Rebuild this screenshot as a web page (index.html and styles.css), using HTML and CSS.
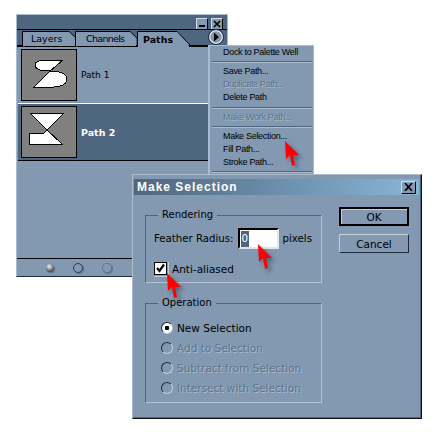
FILE: index.html
```html
<!DOCTYPE html>
<html>
<head>
  <title>Make Selection</title>
  <meta name="viewport" content="width=device-width, initial-scale=1.0">
  <link rel="stylesheet" href="styles.css">
</head>
<body>
  <!-- Paths palette -->
  <div class="palette">
    <div class="palette-title">
      <span class="win-btn"><span class="min-mark"></span></span>
      <span class="win-btn">
        <svg width="8" height="8" viewBox="0 0 8 8"><path d="M1 1l6 6M7 1l-6 6" stroke="#000" stroke-width="1.6"/></svg>
      </span>
    </div>
    <div class="tabs">
      <div class="tab">
        <svg class="tab-bg" width="54" height="16" viewBox="0 0 54 16"><path d="M.5 15.5V.5H47L54 7" fill="#8299b1" stroke="#000"/><path d="M47 1l6 7v7H1V1z" fill="#8299b1"/></svg>
        <span class="tab-label">Layers</span>
      </div>
      <div class="tab tab-wide">
        <svg class="tab-bg" width="63" height="16" viewBox="0 0 63 16"><path d="M.5 15.5V.5H55L62 7" fill="#8299b1" stroke="#000"/><path d="M55 1l6 7v7H1V1z" fill="#8299b1"/></svg>
        <span class="tab-label">Channels</span>
      </div>
      <div class="tab tab-active">
        <svg class="tab-bg" width="54" height="17" viewBox="0 0 54 17"><path d="M.5 16V.5H40L53 14" fill="#8299b1" stroke="#000"/><path d="M40 1l12 14v2H1V1z" fill="#8299b1"/></svg>
        <span class="tab-label">Paths</span>
      </div>
      <svg class="menu-btn" width="16" height="16" viewBox="0 0 16 16">
        <circle cx="8" cy="8" r="6.5" fill="#8299b1" stroke="#dfe6ee" stroke-width="1.6"/>
        <circle cx="8" cy="8" r="7.5" fill="none" stroke="#1c2a3a"/>
        <path d="M6 3.5l5 4.5-5 4.5z" fill="#000"/>
      </svg>
    </div>
    <div class="path-list">
      <div class="path-row">
        <div class="thumb">
          <svg width="54" height="50" viewBox="0 0 54 50"><path d="M41 10H25C17 10 13 12 13 15C13 19 19 21 28 21ZM28 21C38 21 45 24 45 29C45 34 39 37 32 37H12Z" fill="#fff" stroke="#000"/></svg>
        </div>
        <span class="path-name">Path 1</span>
      </div>
      <div class="path-row path-row-active">
        <div class="thumb">
          <svg width="54" height="50" viewBox="0 0 54 50"><path d="M8 6H42L25 23ZM25 23L40 37H7V26H22Z" fill="#fff" stroke="#000"/></svg>
        </div>
        <span class="path-name">Path 2</span>
      </div>
    </div>
    <div class="palette-foot">
      <span class="foot-ball"></span>
      <span class="foot-ring"></span>
      <span class="foot-ring foot-dotted"></span>
    </div>
  </div>

  <!-- palette flyout menu -->
  <div class="menu">
    <div class="menu-item">Dock to Palette Well</div>
    <div class="menu-sep"></div>
    <div class="menu-item">Save Path...</div>
    <div class="menu-item off">Duplicate Path...</div>
    <div class="menu-item">Delete Path</div>
    <div class="menu-sep menu-sep-wide"></div>
    <div class="menu-item off">Make Work Path...</div>
    <div class="menu-sep"></div>
    <div class="menu-item">Make Selection...</div>
    <div class="menu-item">Fill Path...</div>
    <div class="menu-item">Stroke Path...</div>
    <div class="menu-sep"></div>
  </div>

  <!-- dialog -->
  <div class="dialog">
    <div class="dialog-title">
      <span>Make Selection</span>
      <span class="close-btn">
        <svg width="9" height="8" viewBox="0 0 9 8"><path d="M1 0l7 8M8 0l-7 8" stroke="#000" stroke-width="1.7"/></svg>
      </span>
    </div>
    <div class="dialog-body">
      <div class="groups">
        <fieldset class="group group-render">
          <legend>Rendering</legend>
          <div class="feather">
            <span>Feather Radius:</span>
            <span class="field"><span class="field-sel">0</span></span>
            <span>pixels</span>
          </div>
          <div class="check-row">
            <span class="check">
              <svg width="11" height="11" viewBox="0 0 11 11"><path d="M2 5l2.5 3L9 1.5" fill="none" stroke="#000" stroke-width="2.2"/></svg>
            </span>
            <span>Anti-aliased</span>
          </div>
        </fieldset>
        <fieldset class="group group-op">
          <legend>Operation</legend>
          <div class="radio-row"><span class="radio radio-on"></span>New Selection</div>
          <div class="radio-row off"><span class="radio"></span>Add to Selection</div>
          <div class="radio-row off"><span class="radio"></span>Subtract from Selection</div>
          <div class="radio-row off"><span class="radio"></span>Intersect with Selection</div>
        </fieldset>
      </div>
      <div class="buttons">
        <div class="btn btn-default">OK</div>
        <div class="btn">Cancel</div>
      </div>
    </div>
  </div>

  <!-- red pointers -->
  <svg class="arrow arrow-menu" width="14" height="25" viewBox="0 0 14 25"><path d="M0 0L1 18L5 14L7 25L10 24L8 14L14 14Z" fill="#f00"/></svg>
  <svg class="arrow arrow-feather" width="14" height="25" viewBox="0 0 14 25"><path d="M0 0L1 18L5 14L7 25L10 24L8 14L14 14Z" fill="#f00"/></svg>
  <svg class="arrow arrow-check" width="14" height="25" viewBox="0 0 14 25"><path d="M0 0L1 18L5 14L7 25L10 24L8 14L14 14Z" fill="#f00"/></svg>
</body>
</html>
```

FILE: styles.css
```css
body {
  margin: 0;
  background: #fff;
  font-family: "DejaVu Sans", Verdana, sans-serif;
  font-size: 10px;
  color: #000;
}

.palette {
  position: absolute;
  left: 16px;
  top: 14px;
  width: 210px;
  height: 261px;
  background: #8299b1;
  border: 1px solid #a9bbcd;
  border-bottom: 1px solid #1c2a3a;
  display: flex;
  flex-direction: column;
}

.palette-title {
  height: 14px;
  box-sizing: border-box;
  background: #4f6680;
  display: flex;
  justify-content: flex-end;
  gap: 3px;
  padding: 3px 4px 0 0;
  overflow: hidden;
}

.win-btn {
  width: 10px;
  height: 10px;
  background: #8299b1;
  border: 1px solid;
  border-color: #d5dee7 #000 #000 #d5dee7;
  display: flex;
  align-items: center;
  justify-content: center;
}

.min-mark {
  width: 6px;
  height: 2px;
  background: #000;
  margin-top: 3px;
}

.tabs {
  height: 18px;
  box-sizing: border-box;
  background: #4f6680;
  border-top: 1px solid #000;
  border-bottom: 2px solid #000;
  display: flex;
  padding: 1px 0 0 5px;
  position: relative;
}

.tab {
  position: relative;
  width: 53px;
  height: 15px;
  font-size: 9.5px;
  display: flex;
  align-items: center;
  padding-left: 9px;
  box-sizing: border-box;
}

.tab-wide {
  width: 62px;
  padding-left: 11px;
  letter-spacing: -.7px;
}

.tab-active {
  font-weight: bold;
  height: 17px;
  padding-left: 6px;
  z-index: 1;
}

.tab-bg {
  position: absolute;
  left: 0;
  top: 0;
}

.tab-label {
  position: relative;
}

.menu-btn {
  position: absolute;
  left: 191px;
  top: -1px;
}

.path-list {
  width: 191px;
  margin-left: 1px;
  font-size: 9px;
}

.path-row {
  height: 57px;
  box-sizing: border-box;
  border-bottom: 1px solid #fff;
  display: flex;
  align-items: center;
  gap: 4px;
  padding-left: 3px;
}

.path-row-active {
  background: #4f6680;
  color: #fff;
  font-size: 9.5px;
  font-weight: bold;
  border-bottom: 1px solid #000;
}

.thumb {
  width: 54px;
  height: 50px;
  background: #808080;
  border: 1px solid #000;
  flex: none;
}

.thumb svg {
  display: block;
  shape-rendering: crispEdges;
}

.palette-foot {
  margin-top: auto;
  height: 17px;
  border-top: 1px solid #000;
  display: flex;
  align-items: center;
  gap: 20px;
  padding-left: 29px;
}

.foot-ball,
.foot-ring {
  width: 8px;
  height: 8px;
  border-radius: 50%;
  flex: none;
  box-shadow: 1px 1px 1px rgba(30, 40, 60, .4);
}

.foot-ball {
  background: radial-gradient(circle at 40% 30%, #f2f2f2, #444 75%);
}

.foot-ring {
  border: 1px solid #2e3d50;
  margin-left: -1px;
}

.foot-dotted {
  border: 1px dotted #46586d;
}

.menu {
  position: absolute;
  left: 208px;
  top: 45px;
  width: 105px;
  height: 129px;
  box-sizing: border-box;
  background: #8299b1;
  border-left: 2px solid #a9bbcd;
  border-top: 1px solid #a9bbcd;
  font-family: "Liberation Sans", Arial, sans-serif;
  font-size: 9px;
  letter-spacing: -.3px;
  box-shadow: 1px 0 0 #a9bbcd;
}

.menu-item {
  height: 13px;
  line-height: 13px;
  padding-left: 13px;
  white-space: nowrap;
}

.menu-sep {
  height: 1px;
  margin: 2px 1px 2px 2px;
  background: #4f6680;
  border-bottom: 1px solid #a9bbcd;
}

.menu-sep-wide {
  margin-top: 3px;
}

.off {
  color: #60748b;
  text-shadow: 1px 1px 0 #a9bbcd;
}

.dialog {
  position: absolute;
  left: 132px;
  top: 174px;
  width: 290px;
  height: 245px;
  box-sizing: border-box;
  background: #8299b1;
  border: 1px solid;
  border-color: #a9bbcd #111 #111 #a9bbcd;
  padding: 4px 2px 2px 1px;
  box-shadow: inset -1px -1px 0 #4f6680;
  font-size: 10.5px;
}

.dialog-title {
  height: 16px;
  background: linear-gradient(90deg, #4f6680, #87b6d5);
  color: #fff;
  font-family: "Liberation Sans", Arial, sans-serif;
  font-weight: bold;
  font-size: 12px;
  letter-spacing: 1px;
  display: flex;
  align-items: center;
  justify-content: space-between;
  padding: 0 3px;
}

.close-btn {
  width: 15px;
  height: 13px;
  box-sizing: border-box;
  background: #8299b1;
  border: 1px solid;
  border-color: #d5dee7 #000 #000 #d5dee7;
  display: flex;
  align-items: center;
  justify-content: center;
}

.dialog-body {
  display: flex;
  padding: 14px 0 0 11px;
  gap: 17px;
}

.group {
  width: 177px;
  box-sizing: border-box;
  margin: 0;
  padding: 0;
  border: 1px solid #4f6680;
  border-right-color: #b4c3d3;
  border-bottom-color: #b4c3d3;
}

.group legend {
  margin-left: 12px;
  padding: 0 4px;
  font-size: 10px;
  line-height: 12px;
}

.group-render {
  height: 74px;
  padding-top: 7px;
}

.feather {
  display: flex;
  align-items: center;
  gap: 4px;
  height: 21px;
  margin-left: 8px;
  font-size: 10.2px;
  white-space: nowrap;
}

.field {
  width: 41px;
  height: 21px;
  box-sizing: border-box;
  background: #fff;
  border: 2px solid #000;
  border-right-color: #dfe6ee;
  border-bottom-color: #dfe6ee;
  display: flex;
  align-items: center;
  padding-left: 1px;
}

.field-sel {
  background: #4f6680;
  color: #fff;
  line-height: 16px;
  padding: 0 1px;
}

.check-row {
  display: flex;
  align-items: center;
  gap: 5px;
  margin: 13px 0 0 8px;
}

.check {
  width: 13px;
  height: 13px;
  box-sizing: border-box;
  background: #fff;
  border: 1px solid #000;
  box-shadow: 0 0 0 1px #8299b1, 1px 1px 0 1px #c3d0dc;
  display: flex;
  align-items: center;
  justify-content: center;
}

.group-op {
  height: 106px;
  margin-top: 14px;
  padding-top: 9px;
}

.radio-row {
  height: 20px;
  display: flex;
  align-items: center;
  gap: 4px;
  margin-left: 15px;
}

.radio {
  width: 12px;
  height: 12px;
  border-radius: 50%;
  box-sizing: border-box;
  border: 1px solid #1c2a3a;
  border-right-color: #c3d0dc;
  border-bottom-color: #c3d0dc;
}

.radio-on {
  background: radial-gradient(circle, #000 2px, #fff 2.5px);
}

.buttons {
  display: flex;
  flex-direction: column;
  gap: 8px;
  margin-top: -2px;
}

.btn {
  width: 70px;
  height: 19px;
  box-sizing: border-box;
  border: 1px solid;
  border-color: #c3d0dc #1c2a3a #1c2a3a #c3d0dc;
  display: flex;
  align-items: center;
  justify-content: center;
}

.btn-default {
  border: 2px solid #000;
  box-shadow: inset 1px 1px 0 #c3d0dc;
}

.arrow {
  position: absolute;
  filter: drop-shadow(3px 3px 2px rgba(20, 30, 50, .45));
}

.arrow-menu {
  left: 285px;
  top: 141px;
}

.arrow-feather {
  left: 258px;
  top: 244px;
}

.arrow-check {
  left: 167px;
  top: 273px;
}
```
